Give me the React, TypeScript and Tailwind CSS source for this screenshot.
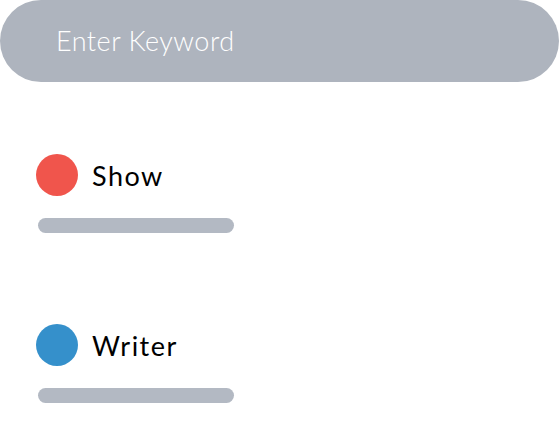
import React from "react";

const Filter = ({ label, color }: { label: string; color: string }) => (
  <div className="flex flex-col">
    <div className="flex items-center gap-[14px] pl-[36px]">
      <span className={`h-[42px] w-[42px] rounded-full ${color}`} />
      <span className="text-[27px] leading-none tracking-[1.5px] text-black">{label}</span>
    </div>
    <div className="ml-[38px] mt-[22px] h-[15px] w-[196px] rounded-full bg-[#b3b9c3]" />
  </div>
);

const App = () => {
  return (
    <div
      className="h-[442px] w-[560px] bg-white"
      style={{ fontFamily: "Lato, 'Open Sans', sans-serif" }}
    >
      <div className="flex h-[82px] w-[559px] items-center rounded-full bg-[#aeb4be] pl-[56px]">
        <span className="text-[27px] font-light tracking-[0.5px] text-white">Enter Keyword</span>
      </div>
      <div className="mt-[72px] flex flex-col gap-[91px]">
        <Filter label="Show" color="bg-[#f0554c]" />
        <Filter label="Writer" color="bg-[#3590cb]" />
      </div>
    </div>
  );
};

export default App;
